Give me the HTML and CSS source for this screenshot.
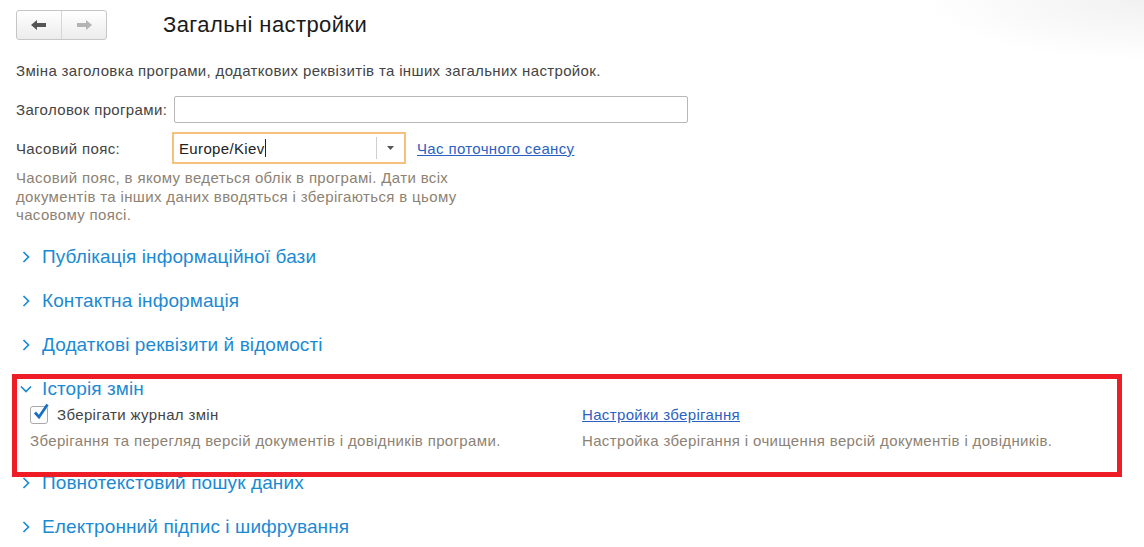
FILE: index.html
```html
<html lang="uk">
<head>
    <meta charset="UTF-8">
    <title>Загальні настройки</title>
    <link rel="stylesheet" href="styles.css">
</head>
<body>
<div class="page">

    <div class="header">
        <div class="nav">
            <button class="nav-btn">
                <svg width="16" height="12" viewBox="0 0 16 12"><path d="M0 6 L6 1 L6 4 L15 4 L15 8 L6 8 L6 11 Z" fill="#555"/></svg>
            </button>
            <button class="nav-btn">
                <svg width="16" height="12" viewBox="0 0 16 12"><path d="M16 6 L10 1 L10 4 L1 4 L1 8 L10 8 L10 11 Z" fill="#b3b3b3"/></svg>
            </button>
        </div>
        <h1>Загальні настройки</h1>
    </div>

    <p class="intro">Зміна заголовка програми, додаткових реквізитів та інших загальних настройок.</p>

    <div class="field-row">
        <label class="field-label">Заголовок програми:</label>
        <div class="text-input"></div>
    </div>

    <div class="field-row tz-row">
        <label class="field-label">Часовий пояс:</label>
        <div class="combo">
            <span class="combo-value">Europe/Kiev<span class="caret"></span></span>
            <span class="combo-btn">
                <svg width="7" height="4" viewBox="0 0 7 4"><path d="M0 0 L7 0 L3.5 4 Z" fill="#555"/></svg>
            </span>
        </div>
        <a class="link" href="#">Час поточного сеансу</a>
    </div>

    <p class="hint tz-hint">Часовий пояс, в якому ведеться облік в програмі. Дати всіх документів та інших даних вводяться і зберігаються в цьому часовому поясі.</p>

    <div class="groups">
        <div class="group-title">
            <svg class="chev" width="8" height="12" viewBox="0 0 8 12"><path d="M1.5 1 L6.5 6 L1.5 11" fill="none" stroke="#1b8ad3" stroke-width="1.7"/></svg>
            Публікація інформаційної бази
        </div>
        <div class="group-title">
            <svg class="chev" width="8" height="12" viewBox="0 0 8 12"><path d="M1.5 1 L6.5 6 L1.5 11" fill="none" stroke="#1b8ad3" stroke-width="1.7"/></svg>
            Контактна інформація
        </div>
        <div class="group-title">
            <svg class="chev" width="8" height="12" viewBox="0 0 8 12"><path d="M1.5 1 L6.5 6 L1.5 11" fill="none" stroke="#1b8ad3" stroke-width="1.7"/></svg>
            Додаткові реквізити й відомості
        </div>

        <div class="group open">
            <div class="group-title">
                <svg class="chev" width="12" height="8" viewBox="0 0 12 8"><path d="M1 1.5 L6 6.5 L11 1.5" fill="none" stroke="#1b8ad3" stroke-width="1.7"/></svg>
                Історія змін
            </div>
            <div class="group-body">
                <div class="check-row">
                    <span class="checkbox">
                        <svg width="18" height="18" viewBox="0 0 18 18"><path d="M3 9.5 L7 14 L15.5 1.5" fill="none" stroke="#1a6fc4" stroke-width="2.8"/></svg>
                    </span>
                    Зберігати журнал змін
                </div>
                <a class="link" href="#">Настройки зберігання</a>
                <div class="hint">Зберігання та перегляд версій документів і довідників програми.</div>
                <div class="hint">Настройка зберігання і очищення версій документів і довідників.</div>
            </div>
            <div class="highlight"></div>
        </div>

        <div class="group-title">
            <svg class="chev" width="8" height="12" viewBox="0 0 8 12"><path d="M1.5 1 L6.5 6 L1.5 11" fill="none" stroke="#1b8ad3" stroke-width="1.7"/></svg>
            Повнотекстовий пошук даних
        </div>
        <div class="group-title">
            <svg class="chev" width="8" height="12" viewBox="0 0 8 12"><path d="M1.5 1 L6.5 6 L1.5 11" fill="none" stroke="#1b8ad3" stroke-width="1.7"/></svg>
            Електронний підпис і шифрування
        </div>
    </div>

</div>
</body>
</html>
```

FILE: styles.css
```css
body {
    margin: 0;
    font-family: "Liberation Sans", Arial, sans-serif;
    font-size: 15px;
    letter-spacing: 0.35px;
    color: #444;
    background: radial-gradient(ellipse 220px 60px at 100% 0, #f1f1f1, #ffffff) no-repeat;
    background-color: #fff;
    overflow: hidden;
}

.page {
    padding: 10px 0 0 16px;
}

.header {
    display: flex;
    align-items: center;
    height: 30px;
}

.nav {
    display: flex;
    width: 91px;
    height: 30px;
    box-sizing: border-box;
    border: 1px solid #c6c6c6;
    border-radius: 3px;
    background: linear-gradient(#ffffff, #ececec);
}

.nav-btn {
    flex: 1;
    border: none;
    background: none;
    padding: 0;
    display: flex;
    align-items: center;
    justify-content: center;
}

.nav-btn + .nav-btn {
    border-left: 1px solid #d6d6d6;
}

h1 {
    margin: 0 0 0 56px;
    font-size: 22px;
    letter-spacing: 0.4px;
    font-weight: normal;
    color: #1a1a1a;
}

.intro {
    margin: 23px 0 0;
    line-height: 16px;
    color: #444;
}

.field-row {
    display: flex;
    align-items: center;
    margin-top: 17px;
}

.field-label {
    width: 158px;
    color: #444;
}

.text-input {
    width: 514px;
    height: 27px;
    box-sizing: border-box;
    border: 1px solid #b8b8b8;
    border-radius: 2px;
    background: #fff;
}

.tz-row {
    margin-top: 9px;
}

.tz-row .field-label {
    width: 156px;
}

.combo {
    display: flex;
    width: 234px;
    height: 32px;
    box-sizing: border-box;
    border: 2px solid #f6c17c;
    background: #fff;
}

.combo-value {
    flex: 1;
    display: flex;
    align-items: center;
    padding-left: 5px;
    color: #222;
}

.caret {
    display: inline-block;
    width: 1px;
    height: 18px;
    background: #222;
}

.combo-btn {
    width: 27px;
    margin: 3px 0;
    border-left: 1px solid #cfcfcf;
    display: flex;
    align-items: center;
    justify-content: center;
}

.link {
    color: #2c5fc2;
    text-decoration: underline;
}

.tz-row .link {
    margin-left: 11px;
}

.hint {
    color: #8d8273;
}

.tz-hint {
    width: 462px;
    margin: 5px 0 0;
    line-height: 18.5px;
}

.groups {
    margin-top: 10px;
}

.group-title {
    display: flex;
    align-items: center;
    height: 44px;
    padding-left: 6px;
    font-size: 19px;
    letter-spacing: 0.1px;
    color: #1b8ad3;
}

.chev {
    margin-right: 12px;
}

.group {
    position: relative;
}

.open .group-title {
    padding-left: 4px;
}

.open .chev {
    margin-right: 10px;
}

.group-body {
    display: grid;
    grid-template-columns: 552px 1fr;
    grid-template-rows: 22px 30px;
    align-items: center;
    margin-top: -7px;
    padding: 0 0 5px 14px;
}

.check-row {
    display: flex;
    align-items: center;
    color: #444;
}

.checkbox {
    width: 18px;
    height: 18px;
    box-sizing: border-box;
    border: 1px solid #a9a9a9;
    border-radius: 3px;
    margin-right: 9px;
    display: flex;
    align-items: center;
    justify-content: center;
    background: #fff;
}

.checkbox svg {
    margin-top: -5px;
    margin-left: 3px;
    flex: none;
}

.highlight {
    position: absolute;
    left: -4px;
    top: 7px;
    width: 1110px;
    height: 103px;
    box-sizing: border-box;
    border: 5px solid #ee1c25;
    pointer-events: none;
}
```
